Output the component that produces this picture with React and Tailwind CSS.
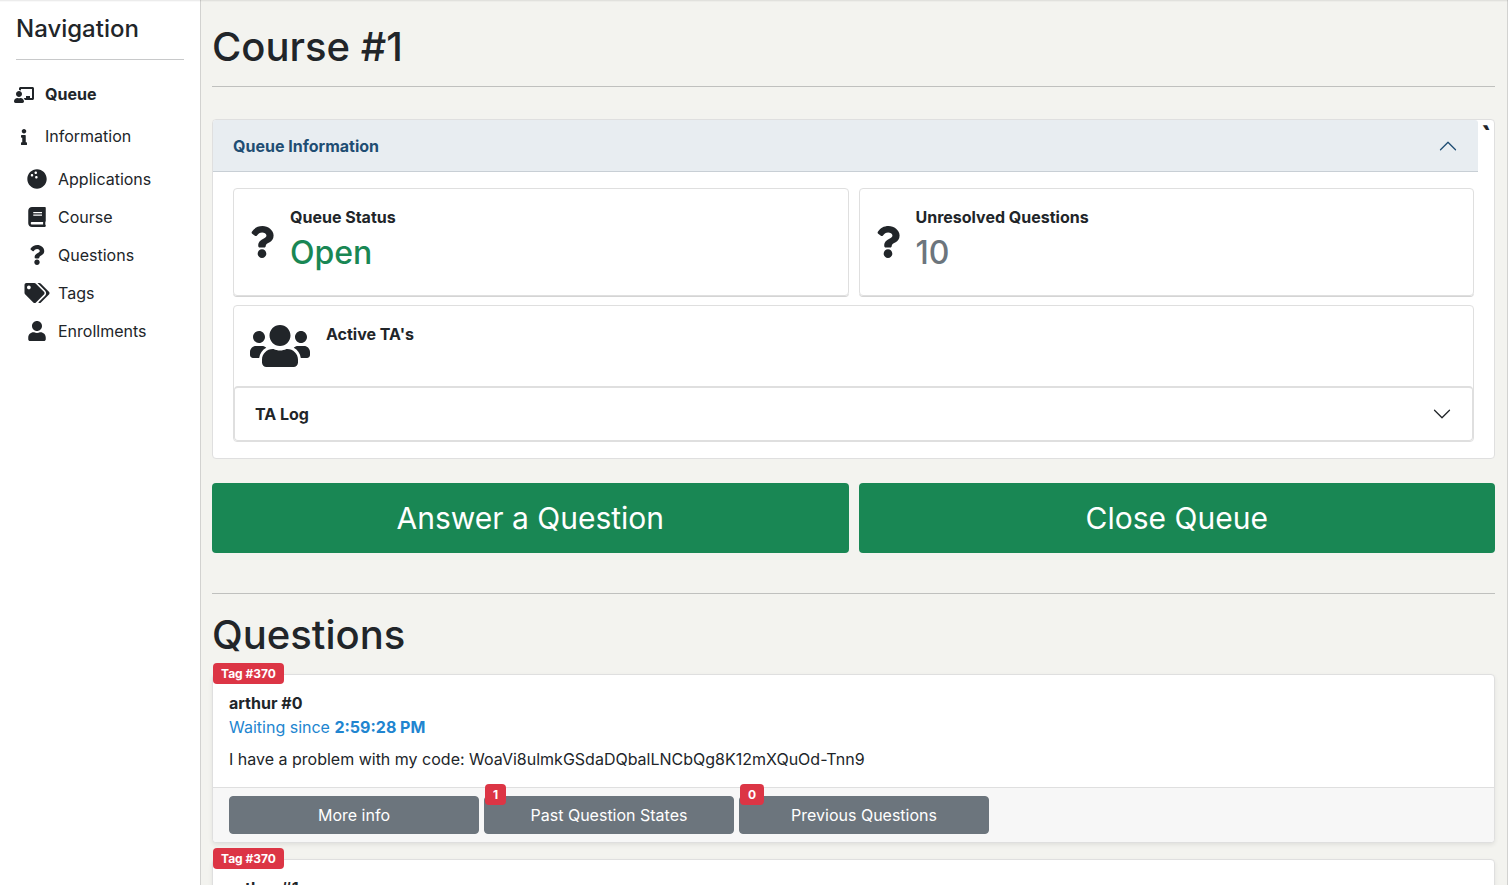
import { useState } from "react";
import {
  FaBook,
  FaBowlingBall,
  FaChalkboardTeacher,
  FaInfo,
  FaQuestion,
  FaTags,
  FaUser,
  FaUsers,
} from "react-icons/fa";

const mainLinks = [
  { label: "Queue", icon: FaChalkboardTeacher, active: true },
  { label: "Information", icon: FaInfo, active: false },
];

const subLinks = [
  { label: "Applications", icon: FaBowlingBall },
  { label: "Course", icon: FaBook },
  { label: "Questions", icon: FaQuestion },
  { label: "Tags", icon: FaTags },
  { label: "Enrollments", icon: FaUser },
];

const questions = [
  {
    tag: "Tag #370",
    name: "arthur #0",
    time: "2:59:28 PM",
    text: "I have a problem with my code: WoaVi8ulmkGSdaDQbalLNCbQg8K12mXQuOd-Tnn9",
    past: 1,
    previous: 0,
  },
  {
    tag: "Tag #370",
    name: "arthur #1",
    time: "2:59:28 PM",
    text: "I have a problem with my code",
    past: 1,
    previous: 0,
  },
];

function Chevron({ open }) {
  return (
    <svg
      viewBox="0 0 16 16"
      fill="currentColor"
      aria-hidden="true"
      className={open ? "size-5 rotate-180" : "size-5"}
    >
      <path
        fillRule="evenodd"
        d="M1.646 4.646a.5.5 0 0 1 .708 0L8 10.293l5.646-5.647a.5.5 0 0 1 .708.708l-6 6a.5.5 0 0 1-.708 0l-6-6a.5.5 0 0 1 0-.708z"
      />
    </svg>
  );
}

function Sidebar() {
  return (
    <aside className="w-[200px] shrink-0 bg-white px-4 pt-3">
      <h2 className="border-b border-[#c8c9ca] pb-3.5 text-2xl leading-[33px] font-medium">
        Navigation
      </h2>
      <nav className="pt-[13px]">
        <ul>
          {mainLinks.map(({ label, icon: Icon, active }) => (
            <li key={label}>
              <a href="#" className="flex h-[42px] items-center gap-[11px]">
                <Icon className="mt-0.5 -ml-0.5 h-4 w-5" />
                <span className={active ? "font-bold" : ""}>{label}</span>
              </a>
            </li>
          ))}
        </ul>
        <ul className="pt-[3px] pl-2">
          {subLinks.map(({ label, icon: Icon }) => (
            <li key={label}>
              <a href="#" className="flex h-[38px] items-center gap-2">
                <Icon className="h-5 w-[26px]" />
                <span>{label}</span>
              </a>
            </li>
          ))}
        </ul>
      </nav>
    </aside>
  );
}

function StatusCard({ title, value, valueClass }) {
  return (
    <div className="flex h-[108px] flex-1 items-center gap-4 rounded border border-[#dfdfdf] px-4 shadow-[0_1px_0_#d4d4d4]">
      <FaQuestion className="h-8 w-6 shrink-0" />
      <div className="h-[74px]">
        <h3 className="leading-6 font-bold">{title}</h3>
        <p className={`pt-1 text-[32px] leading-10 font-medium ${valueClass}`}>{value}</p>
      </div>
    </div>
  );
}

function QueueInformation() {
  const [open, setOpen] = useState(true);
  const [logOpen, setLogOpen] = useState(false);
  return (
    <section className="rounded border border-[#dfdfdf] bg-white">
      <div className="flex h-[52px] items-start">
        <button
          type="button"
          aria-expanded={open}
          onClick={() => setOpen(!open)}
          className="flex h-[52px] flex-1 items-center justify-between rounded-t-[3px] border-b border-[#c8cfd5] bg-[#e8edf1] px-5 font-bold text-[#1f4d73]"
        >
          Queue Information
          <Chevron open={open} />
        </button>
        <span className="w-4 text-center text-[32px] leading-[38px] font-bold">`</span>
      </div>
      {open && (
        <div className="px-5 py-4">
          <div className="flex gap-2.5">
            <StatusCard title="Queue Status" value="Open" valueClass="text-[#198754]" />
            <StatusCard title="Unresolved Questions" value="10" valueClass="text-[#6c757d]" />
          </div>
          <div className="mt-[9px] rounded border border-[#dfdfdf]">
            <div className="flex items-start gap-4 p-4">
              <FaUsers className="h-12 w-[60px]" />
              <h3 className="leading-6 font-bold">Active TA's</h3>
            </div>
            <div className="rounded border border-t-2 border-[#dfdfdf]">
              <button
                type="button"
                aria-expanded={logOpen}
                onClick={() => setLogOpen(!logOpen)}
                className="flex h-[52px] w-full items-center justify-between px-5 font-bold"
              >
                TA Log
                <Chevron open={logOpen} />
              </button>
            </div>
          </div>
        </div>
      )}
    </section>
  );
}

function Badge({ children, className }) {
  return (
    <span
      className={`absolute left-0 rounded bg-[#dc3545] px-2 text-xs leading-[21px] font-bold text-white ${className}`}
    >
      {children}
    </span>
  );
}

function ActionButton({ children, count }) {
  return (
    <button
      type="button"
      className="relative h-[38px] w-[250px] rounded border border-[#6c757d] bg-[#6c757d] text-white"
    >
      {count !== undefined && <Badge className="-top-[13px]">{count}</Badge>}
      {children}
    </button>
  );
}

function QuestionCard({ question }) {
  return (
    <article className="relative rounded border border-[#dfdfdf] bg-white shadow-[0_2px_4px_rgba(0,0,0,0.075)]">
      <Badge className="-top-3">{question.tag}</Badge>
      <div className="p-4">
        <h3 className="leading-6 font-bold">{question.name}</h3>
        <p className="leading-6 text-[#2185d0]">
          Waiting since <strong className="font-bold">{question.time}</strong>
        </p>
        <p className="pt-2 leading-6">{question.text}</p>
      </div>
      <div className="flex gap-[5px] rounded-b border-t border-[#dfdfdf] bg-[#f7f7f7] px-4 py-2">
        <ActionButton>More info</ActionButton>
        <ActionButton count={question.past}>Past Question States</ActionButton>
        <ActionButton count={question.previous}>Previous Questions</ActionButton>
      </div>
    </article>
  );
}

export default function App() {
  return (
    <div className="relative flex min-h-screen bg-[#f3f3ef] font-['Inter',sans-serif] text-base text-[#212529]">
      <div className="pointer-events-none absolute inset-x-0 top-0 h-0.5 bg-linear-to-b from-black/10 to-transparent" />
      <Sidebar />
      <main className="min-w-0 flex-1 border-x border-[#d2d2d0] pt-[23px] pr-3 pb-4 pl-[11px]">
        <h1 className="text-[40px] leading-12 font-medium">Course #1</h1>
        <hr className="mt-[15px] mb-8 border-[#bfc0be]" />
        <QueueInformation />
        <div className="mt-6 flex gap-2.5">
          <button
            type="button"
            className="h-[70px] flex-1 rounded bg-[#198754] text-[30px] text-white"
          >
            Answer a Question
          </button>
          <button
            type="button"
            className="h-[70px] flex-1 rounded bg-[#198754] text-[30px] text-white"
          >
            Close Queue
          </button>
        </div>
        <hr className="mt-10 mb-[17px] border-[#bfc0be]" />
        <h2 className="text-[40px] leading-12 font-medium">Questions</h2>
        <div className="mt-[15px] flex flex-col gap-4">
          {questions.map((question) => (
            <QuestionCard key={question.name} question={question} />
          ))}
        </div>
      </main>
    </div>
  );
}
